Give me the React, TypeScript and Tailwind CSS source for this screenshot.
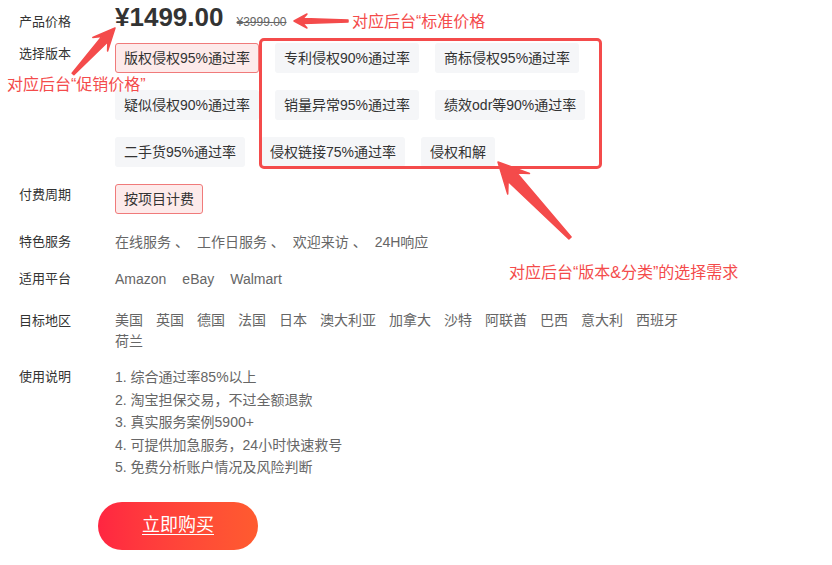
import React from 'react';

const versions = [
  '版权侵权95%通过率',
  '专利侵权90%通过率',
  '商标侵权95%通过率',
  '疑似侵权90%通过率',
  '销量异常95%通过率',
  '绩效odr等90%通过率',
  '二手货95%通过率',
  '侵权链接75%通过率',
  '侵权和解',
];

const services = ['在线服务 、', '工作日服务 、', '欢迎来访 、', '24H响应'];
const platforms = ['Amazon', 'eBay', 'Walmart'];
const regions = ['美国', '英国', '德国', '法国', '日本', '澳大利亚', '加拿大', '沙特', '阿联酋', '巴西', '意大利', '西班牙', '荷兰'];
const notes = [
  '1. 综合通过率85%以上',
  '2. 淘宝担保交易，不过全额退款',
  '3. 真实服务案例5900+',
  '4. 可提供加急服务，24小时快速救号',
  '5. 免费分析账户情况及风险判断',
];

type Pt = [number, number];

// tapered screenshot-style arrow, tail -> tip
const arrowPoints = (tail: Pt, tip: Pt, lw: number, lj: number, wing: number, neck: number, end: number) => {
  const dx = tip[0] - tail[0];
  const dy = tip[1] - tail[1];
  const len = Math.hypot(dx, dy);
  const d: Pt = [dx / len, dy / len];
  const n: Pt = [-d[1], d[0]];
  const at = (back: number, side: number): Pt => [tip[0] - d[0] * back + n[0] * side, tip[1] - d[1] * back + n[1] * side];
  const pts: Pt[] = [
    [tail[0] + n[0] * end, tail[1] + n[1] * end],
    at(lj, neck),
    at(lw, wing),
    tip,
    at(lw, -wing),
    at(lj, -neck),
    [tail[0] - n[0] * end, tail[1] - n[1] * end],
  ];
  return pts.map((p) => `${p[0].toFixed(1)},${p[1].toFixed(1)}`).join(' ');
};

const Label = ({ children }: { children: React.ReactNode }) => (
  <div className="w-[96px] shrink-0 text-[13px] leading-[22px] text-[#333]">{children}</div>
);

export default function App() {
  return (
    <div
      className="relative h-[565px] w-[832px] overflow-hidden bg-white pl-[19px] pt-[4px]"
      style={{ fontFamily: '"Liberation Sans", "Noto Sans CJK SC", sans-serif' }}
    >
      {/* price */}
      <div className="flex h-[39px] items-baseline">
        <Label>产品价格</Label>
        <span className="text-[26px] font-bold leading-[26px] text-[#333]">¥1499.00</span>
        <span className="ml-[13px] text-[12px] text-[#666] line-through">¥3999.00</span>
      </div>

      {/* versions */}
      <div className="flex">
        <Label>选择版本</Label>
        <div className="flex w-[590px] flex-wrap gap-x-4 gap-y-[17px]">
          {versions.map((v, i) => (
            <div
              key={v}
              className={
                i === 0
                  ? 'h-[30px] rounded-[3px] border border-[#f07a7a] bg-[#fdeaea] px-[8px] text-[14px] leading-[28px] text-[#333]'
                  : 'h-[30px] rounded-[3px] border border-transparent bg-[#f5f6f8] px-[8px] text-[14px] leading-[28px] text-[#333]'
              }
            >
              {v}
            </div>
          ))}
        </div>
      </div>

      {/* billing */}
      <div className="mt-[17px] flex">
        <Label>付费周期</Label>
        <div className="h-[30px] rounded-[3px] border border-[#f07a7a] bg-[#fdeaea] px-[8px] text-[14px] leading-[28px] text-[#333]">
          按项目计费
        </div>
      </div>

      <div className="mt-[17px] flex">
        <Label>特色服务</Label>
        <div className="flex gap-x-[8px] text-[14px] leading-[22px] text-[#666]">
          {services.map((s) => (
            <span key={s} className="whitespace-pre">{s}</span>
          ))}
        </div>
      </div>

      <div className="mt-[15px] flex">
        <Label>适用平台</Label>
        <div className="flex gap-x-[16px] text-[14px] leading-[22px] text-[#666]">
          {platforms.map((p) => (
            <span key={p}>{p}</span>
          ))}
        </div>
      </div>

      <div className="mt-[20px] flex">
        <Label>目标地区</Label>
        <div className="flex w-[590px] flex-wrap gap-x-[13px] text-[14px] leading-[21px] text-[#666]">
          {regions.map((r) => (
            <span key={r}>{r}</span>
          ))}
        </div>
      </div>

      <div className="mt-[14px] flex">
        <Label>使用说明</Label>
        <div className="flex flex-col text-[14px] leading-[22.5px] text-[#666]">
          {notes.map((n) => (
            <span key={n}>{n}</span>
          ))}
        </div>
      </div>

      <div className="ml-[79px] mt-[23px] flex h-[48px] w-[160px] items-center justify-center rounded-full bg-linear-to-r from-[#ff2541] to-[#ff5b2f] text-[18px] text-white underline underline-offset-[3px]">
        立即购买
      </div>

      {/* annotations */}
      <div className="pointer-events-none absolute left-[259px] top-[38px] h-[131px] w-[343px] rounded-[5px] border-[3px] border-[#f44b4b]" />
      <svg className="pointer-events-none absolute left-0 top-0" width="832" height="565">
        <g fill="#f44b4b" stroke="#f44b4b" strokeWidth="1.5" strokeLinejoin="round">
          <polygon points={arrowPoints([73, 74], [115, 28], 22, 15, 10, 4, 1.2)} />
          <polygon points={arrowPoints([348, 21], [294, 21], 13, 9, 7, 2.5, 1)} />
          <polygon points={arrowPoints([570, 238], [498, 162], 30, 21, 15, 6, 1.5)} />
        </g>
      </svg>
      <div className="pointer-events-none absolute left-[7px] top-[75px] text-[16px] leading-[20px] text-[#f44b4b]">
        对应后台“促销价格”
      </div>
      <div className="pointer-events-none absolute left-[352px] top-[12px] text-[16px] leading-[20px] text-[#f44b4b]">
        对应后台“标准价格
      </div>
      <div className="pointer-events-none absolute left-[509px] top-[263px] text-[16px] leading-[20px] text-[#f44b4b]">
        对应后台“版本&amp;分类”的选择需求
      </div>
    </div>
  );
}
